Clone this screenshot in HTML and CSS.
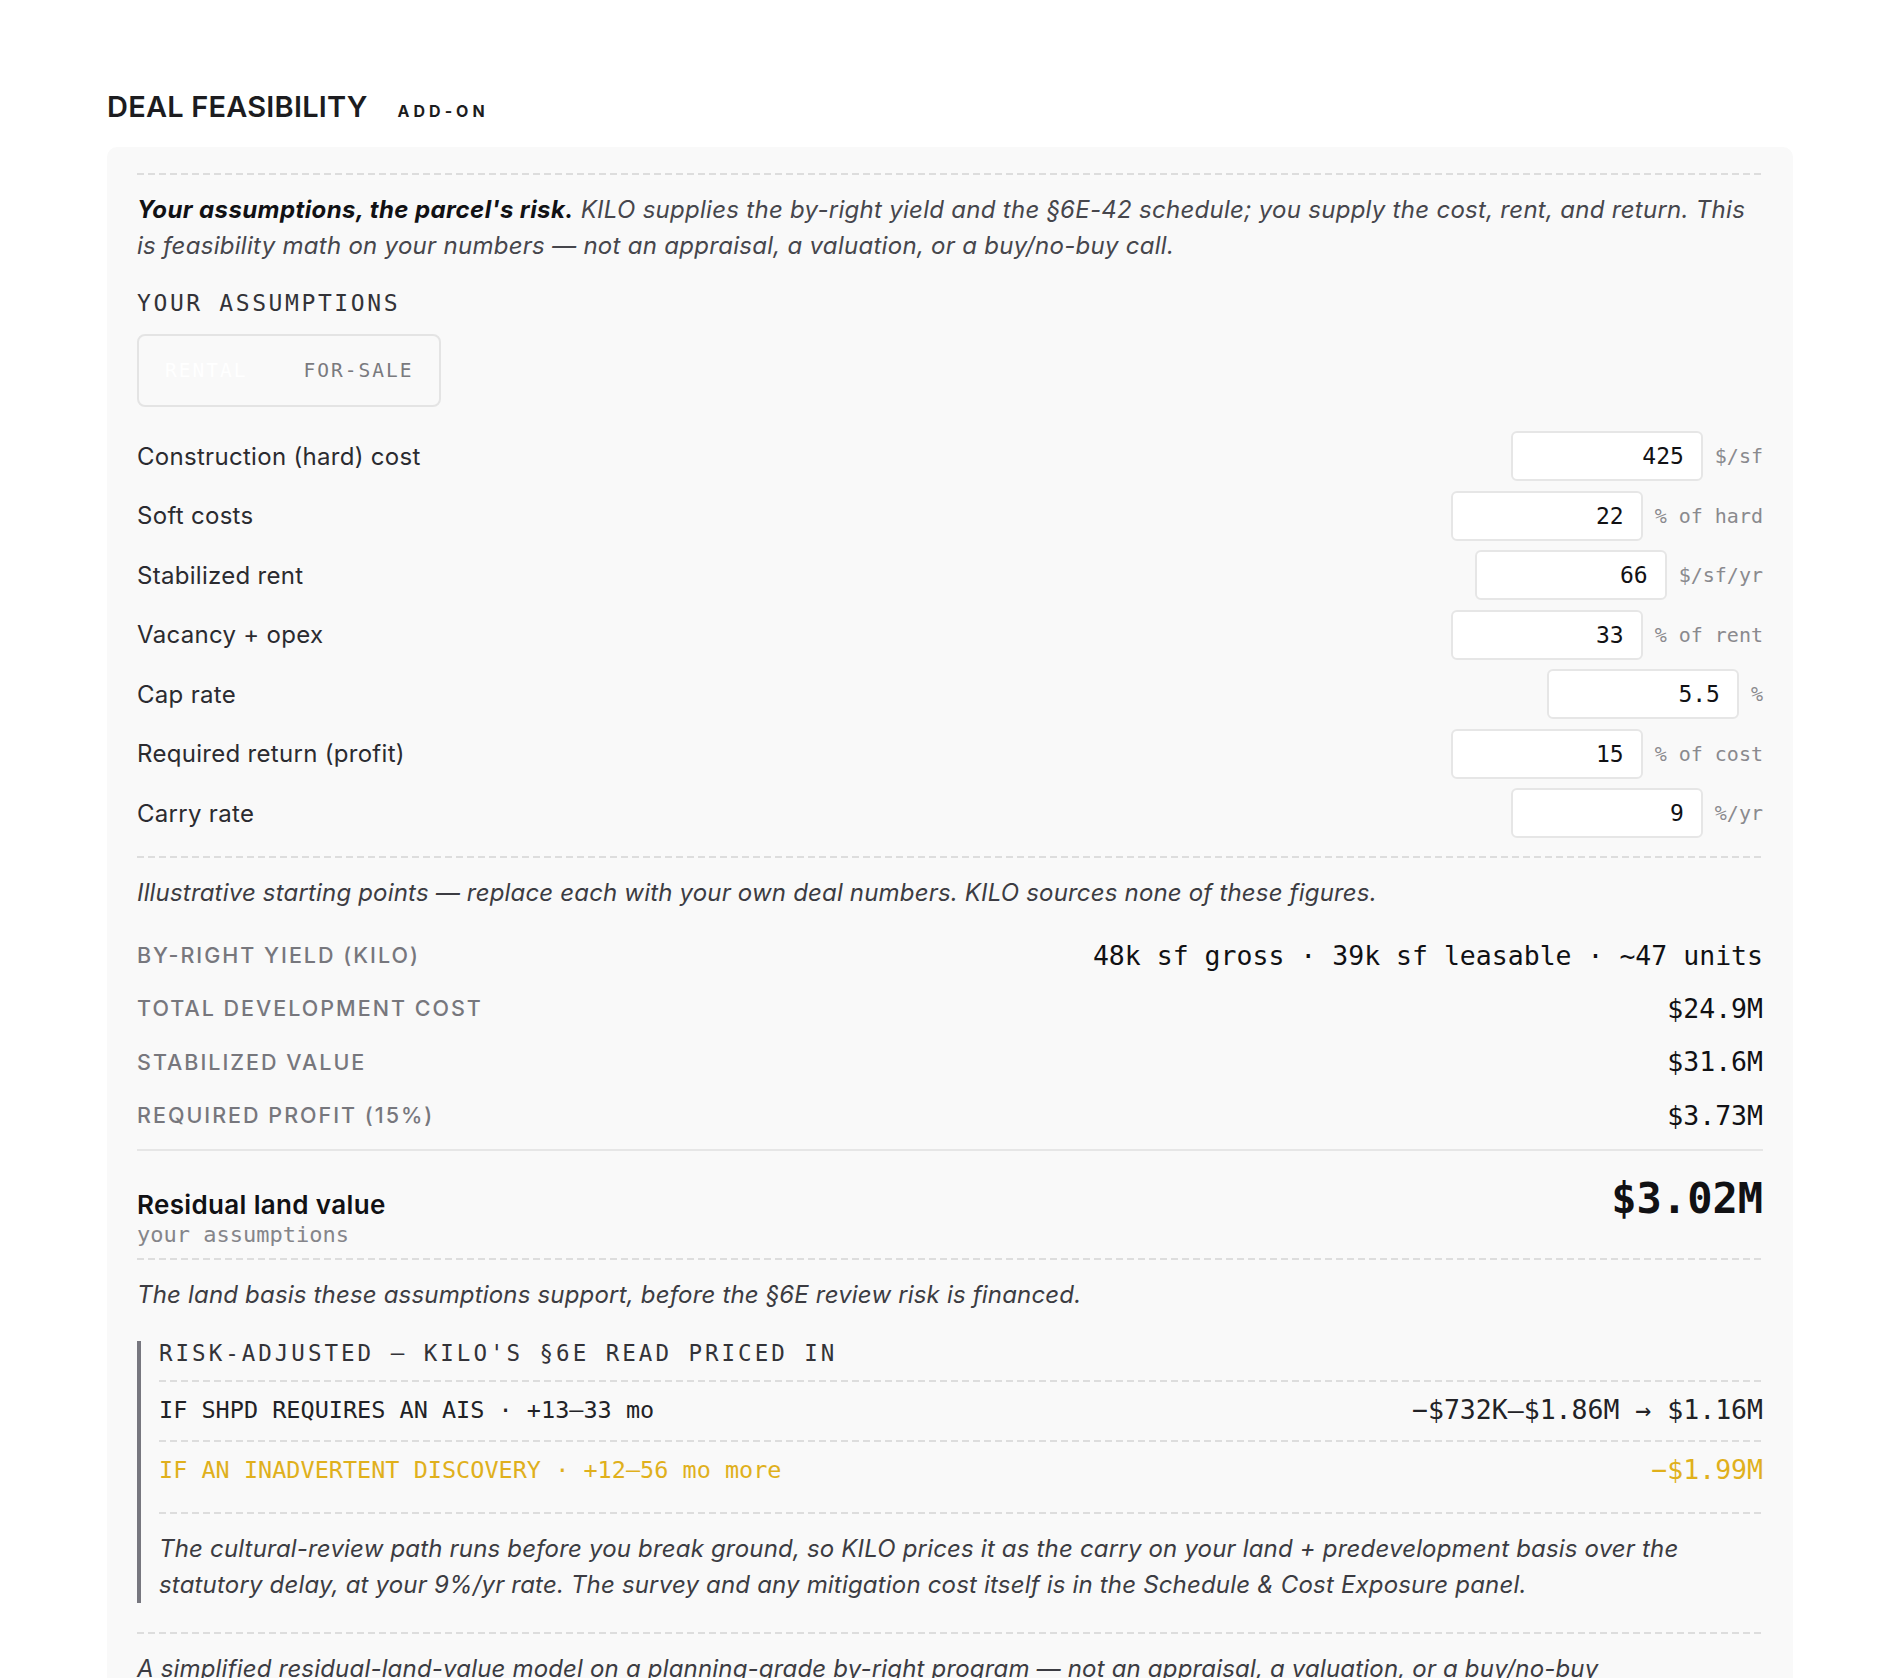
FILE: index.html
```html
<!DOCTYPE html>
<html lang="en">
<head>
<meta charset="utf-8">
<title>Deal Feasibility</title>
<link rel="stylesheet" href="styles.css">
</head>
<body>
<header class="head">
  <h2 class="head-title">DEAL FEASIBILITY</h2>
  <span class="head-tag">ADD-ON</span>
</header>
<section class="card">
  <p class="intro dashed"><strong>Your assumptions, the parcel's risk.</strong> KILO supplies the by-right yield and the §6E-42 schedule; you supply the cost, rent, and return. This is feasibility math on your numbers — not an appraisal, a valuation, or a buy/no-buy call.</p>

  <div class="sec-label">YOUR ASSUMPTIONS</div>
  <div class="toggle">
    <button class="toggle-btn is-active" type="button">RENTAL</button>
    <button class="toggle-btn" type="button">FOR-SALE</button>
  </div>

  <div class="inputs">
    <div class="in-row"><span class="in-label">Construction (hard) cost</span><span class="in-field"><input class="in-box" type="text" value="425"><span class="in-unit">$/sf</span></span></div>
    <div class="in-row"><span class="in-label">Soft costs</span><span class="in-field"><input class="in-box" type="text" value="22"><span class="in-unit">% of hard</span></span></div>
    <div class="in-row"><span class="in-label">Stabilized rent</span><span class="in-field"><input class="in-box" type="text" value="66"><span class="in-unit">$/sf/yr</span></span></div>
    <div class="in-row"><span class="in-label">Vacancy + opex</span><span class="in-field"><input class="in-box" type="text" value="33"><span class="in-unit">% of rent</span></span></div>
    <div class="in-row"><span class="in-label">Cap rate</span><span class="in-field"><input class="in-box" type="text" value="5.5"><span class="in-unit">%</span></span></div>
    <div class="in-row"><span class="in-label">Required return (profit)</span><span class="in-field"><input class="in-box" type="text" value="15"><span class="in-unit">% of cost</span></span></div>
    <div class="in-row"><span class="in-label">Carry rate</span><span class="in-field"><input class="in-box" type="text" value="9"><span class="in-unit">%/yr</span></span></div>
  </div>

  <p class="note dashed note-illus">Illustrative starting points — replace each with your own deal numbers. KILO sources none of these figures.</p>

  <div class="stats">
    <div class="stat"><span class="stat-label">BY-RIGHT YIELD (KILO)</span><span class="stat-val">48k sf gross · 39k sf leasable · ~47 units</span></div>
    <div class="stat"><span class="stat-label">TOTAL DEVELOPMENT COST</span><span class="stat-val">$24.9M</span></div>
    <div class="stat"><span class="stat-label">STABILIZED VALUE</span><span class="stat-val">$31.6M</span></div>
    <div class="stat"><span class="stat-label">REQUIRED PROFIT (15%)</span><span class="stat-val">$3.73M</span></div>
  </div>

  <div class="residual">
    <div class="res-left">
      <div class="res-title">Residual land value</div>
      <div class="res-sub">your assumptions</div>
    </div>
    <div class="res-val">$3.02M</div>
  </div>

  <p class="note dashed">The land basis these assumptions support, before the §6E review risk is financed.</p>

  <div class="risk">
    <div class="risk-label">RISK-ADJUSTED — KILO'S §6E READ PRICED IN</div>
    <div class="risk-row dash-top"><span class="risk-name">IF SHPD REQUIRES AN AIS · +13–33 mo</span><span class="risk-val">−$732K–$1.86M → $1.16M</span></div>
    <div class="risk-row risk-warn dash-top"><span class="risk-name">IF AN INADVERTENT DISCOVERY · +12–56 mo more</span><span class="risk-val">−$1.99M</span></div>
    <p class="note dashed">The cultural-review path runs before you break ground, so KILO prices it as the carry on your land + predevelopment basis over the statutory delay, at your 9%/yr rate. The survey and any mitigation cost itself is in the Schedule &amp; Cost Exposure panel.</p>
  </div>

  <p class="note dashed note-foot">A simplified residual-land-value model on a planning-grade by-right program — not an appraisal, a valuation, or a buy/no-buy recommendation. Verify every input against your own underwriting before relying on it.</p>
</section>
</body>
</html>
```

FILE: styles.css
```css
* {
  box-sizing: border-box;
}

body {
  margin: 0;
  padding: 90px 107px 0;
  background: #ffffff;
  font-family: Inter, "Noto Sans", sans-serif;
  color: #222226;
}

.head {
  display: flex;
  align-items: baseline;
  gap: 30px;
  height: 34px;
  margin-bottom: 23px;
}

.head-title {
  margin: 0;
  font-size: 29px;
  line-height: 34px;
  font-weight: 600;
  letter-spacing: 0.2px;
  color: #1c1c20;
}

.head-tag {
  font-size: 16px;
  font-weight: 700;
  letter-spacing: 4px;
  color: #1c1c20;
}

.card {
  background: #f9f9f9;
  border-radius: 10px;
  padding: 26px 30px 60px;
}

.dashed,
.dash-top {
  background-image: repeating-linear-gradient(90deg, #dddddd 0 7px, transparent 7px 11px);
  background-size: 100% 2px;
  background-repeat: no-repeat;
  background-position: left top;
}

.dashed {
  padding-top: 19px;
}

.intro {
  margin: 0;
  font-size: 24px;
  line-height: 36px;
  letter-spacing: 0.28px;
  font-style: italic;
  color: #46464c;
}

.intro strong {
  font-weight: 700;
  letter-spacing: 0.4px;
  color: #111114;
}

.sec-label {
  margin-top: 25px;
  font-family: "DejaVu Sans Mono", monospace;
  font-size: 23px;
  line-height: 28px;
  letter-spacing: 2.6px;
  color: #333338;
}

.toggle {
  display: inline-flex;
  gap: 12px;
  margin-top: 17px;
  height: 73px;
  padding: 4px;
  border: 2px solid #e4e4e4;
  border-radius: 8px;
}

.toggle-btn {
  padding: 0 22px;
  border: 0;
  background: transparent;
  font-family: "DejaVu Sans Mono", monospace;
  font-size: 19.5px;
  letter-spacing: 2px;
  color: #7a7a7e;
}

.toggle-btn.is-active {
  color: #ffffff;
}

.inputs {
  display: flex;
  flex-direction: column;
  gap: 9.5px;
  margin-top: 24px;
}

.in-row {
  display: flex;
  align-items: center;
  justify-content: space-between;
  height: 50px;
}

.in-label {
  font-size: 24px;
  letter-spacing: 0.3px;
  color: #2b2b30;
}

.in-field {
  display: flex;
  align-items: center;
  gap: 12px;
}

.in-box {
  width: 192px;
  height: 50px;
  padding: 0 17px;
  border: 2px solid #e6e6e6;
  border-radius: 6px;
  background: #ffffff;
  text-align: right;
  font-family: "DejaVu Sans Mono", monospace;
  font-size: 23px;
  color: #111114;
}

.in-unit {
  font-family: "DejaVu Sans Mono", monospace;
  font-size: 20px;
  color: #8a8a8e;
}

.note {
  margin: 0;
  font-size: 24px;
  line-height: 36px;
  letter-spacing: 0.18px;
  font-style: italic;
  color: #3c3c42;
}

.note-illus {
  margin-top: 18px;
}

.note-foot {
  margin-top: 29px;
}

.stats {
  margin-top: 17.5px;
  padding-bottom: 7px;
  border-bottom: 2px solid #e6e6e6;
}

.stat {
  display: flex;
  align-items: center;
  justify-content: space-between;
  height: 53.3px;
}

.stat-label {
  font-size: 21.5px;
  font-weight: 500;
  letter-spacing: 2px;
  color: #77777d;
}

.stat-val {
  font-family: "DejaVu Sans Mono", monospace;
  font-size: 26.5px;
  color: #111114;
}

.residual {
  display: flex;
  justify-content: space-between;
  align-items: flex-start;
  padding: 39px 0 8px;
}

.res-title {
  font-size: 26px;
  line-height: 30px;
  font-weight: 600;
  letter-spacing: 0.35px;
  color: #111114;
}

.res-sub {
  font-family: "DejaVu Sans Mono", monospace;
  font-size: 22px;
  line-height: 30px;
  color: #85858a;
}

.res-val {
  margin-top: -6px;
  font-family: "DejaVu Sans Mono", monospace;
  font-size: 42px;
  line-height: 30px;
  font-weight: 700;
  color: #111114;
}

.risk {
  margin-top: 28px;
  padding-left: 18px;
  border-left: 4px solid #77777f;
}

.risk-label {
  margin-bottom: 15px;
  font-family: "DejaVu Sans Mono", monospace;
  font-size: 22.5px;
  line-height: 24px;
  letter-spacing: 3px;
  color: #333338;
}

.risk-row {
  display: flex;
  align-items: center;
  justify-content: space-between;
  height: 60px;
  font-family: "DejaVu Sans Mono", monospace;
  color: #222226;
}

.risk-warn {
  height: 72px;
  padding-bottom: 12px;
  color: #e0b01c;
}

.risk-name {
  font-size: 23.5px;
}

.risk-val {
  font-size: 26.5px;
}
```
